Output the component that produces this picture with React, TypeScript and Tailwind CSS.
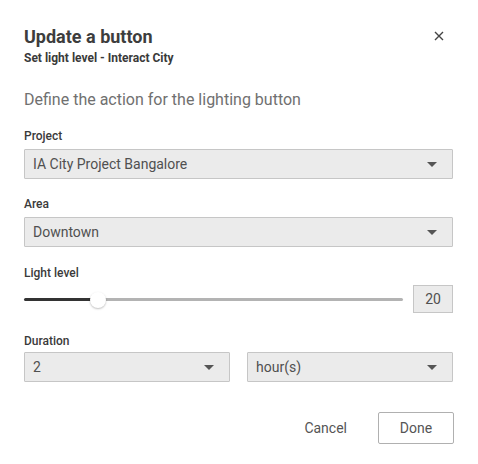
import React from "react";

const Caret = () => (
  <svg width="10" height="5" viewBox="0 0 10 5" className="shrink-0">
    <path d="M0 0 L10 0 L5 5 Z" fill="#555" />
  </svg>
);

const Select = ({ value, className = "" }: { value: string; className?: string }) => (
  <div
    className={`flex h-[30px] items-center justify-between rounded-[1px] border border-[#c6c6c6] bg-[#ebebeb] pl-[8px] pr-[15px] text-[14px] text-[#505050] ${className}`}
  >
    <span>{value}</span>
    <Caret />
  </div>
);

const Label = ({ children }: { children: React.ReactNode }) => (
  <div className="text-[12px] font-medium leading-[14px] text-[#3a3a3a]">{children}</div>
);

export default function App() {
  return (
    <div
      className="h-[464px] w-[478px] bg-white px-[24px] pt-[26px]"
      style={{ fontFamily: "Roboto, 'Liberation Sans', sans-serif" }}
    >
      <div className="flex items-start justify-between">
        <div>
          <div className="text-[18px] font-bold leading-[22px] text-[#3d3d3d]">Update a button</div>
          <div className="mt-[3px] text-[12px] font-bold leading-[14px] text-[#3a3a3a]">
            Set light level - Interact City
          </div>
        </div>
        <svg width="10" height="10" viewBox="0 0 10 10" className="mr-[10px] mt-[5px]">
          <path d="M1 1 L9 9 M9 1 L1 9" stroke="#444" strokeWidth="1.4" />
        </svg>
      </div>

      <div className="mt-[25px] text-[16px] leading-[20px] text-[#707070]">
        Define the action for the lighting button
      </div>

      <div className="mt-[19px]">
        <Label>Project</Label>
        <Select value="IA City Project Bangalore" className="mt-[6px] mr-[1px]" />
      </div>

      <div className="mt-[18px]">
        <Label>Area</Label>
        <Select value="Downtown" className="mt-[6px] mr-[1px]" />
      </div>

      <div className="mt-[19px]">
        <Label>Light level</Label>
        <div className="mt-[5px] flex items-center">
          <div className="relative flex h-[28px] flex-1 items-center">
            <div className="h-[3px] w-[74px] rounded-l-full bg-[#333]" />
            <div className="h-[3px] flex-1 rounded-r-full bg-[#b3b3b3]" />
            <div className="absolute left-[66px] top-[7px] h-[16px] w-[16px] rounded-full bg-white shadow-[0_1px_2px_rgba(0,0,0,0.25)]" />
          </div>
          <div className="ml-[10px] mr-[1px] flex h-[28px] w-[40px] items-center justify-center border border-[#c6c6c6] bg-[#ebebeb] text-[14px] text-[#505050]">
            20
          </div>
        </div>
      </div>

      <div className="mt-[21px]">
        <Label>Duration</Label>
        <div className="mt-[4px] mr-[1px] flex gap-[17px]">
          <Select value="2" className="w-[206px]" />
          <Select value="hour(s)" className="flex-1" />
        </div>
      </div>

      <div className="mt-[30px] flex items-center justify-end">
        <button className="mr-[31px] text-[14px] text-[#555]">Cancel</button>
        <button className="h-[32px] w-[76px] rounded-[2px] border border-[#b0b0b0] bg-white text-[14px] text-[#555]">
          Done
        </button>
      </div>
    </div>
  );
}
